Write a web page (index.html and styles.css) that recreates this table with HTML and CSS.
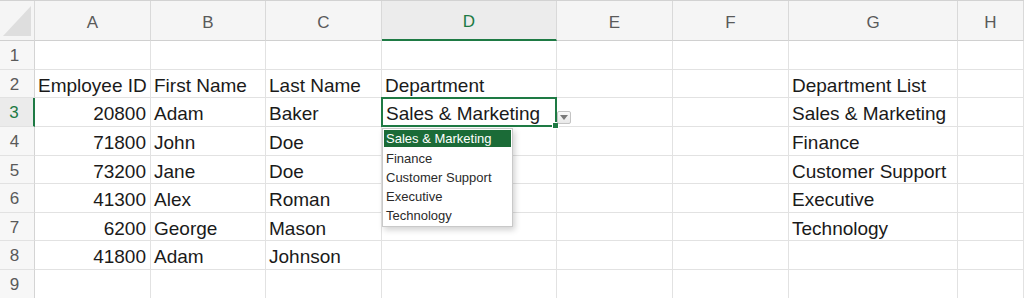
FILE: index.html
```html
<!DOCTYPE html>
<html>
<head>
<meta charset="utf-8">
<link rel="stylesheet" href="styles.css">
</head>
<body>
<div class="sheet">
  <div class="grid">
    <div class="hd corner"><svg class="tri" width="30" height="32" viewBox="0 0 30 32"><polygon points="29,1 29,31 1,31" fill="#dedede"/></svg></div>
    <div class="hd col">A</div>
    <div class="hd col">B</div>
    <div class="hd col">C</div>
    <div class="hd col sel-col">D</div>
    <div class="hd col">E</div>
    <div class="hd col">F</div>
    <div class="hd col">G</div>
    <div class="hd col">H</div>

    <div class="rh">1</div><div class="c"></div><div class="c"></div><div class="c"></div><div class="c"></div><div class="c"></div><div class="c"></div><div class="c"></div><div class="c"></div>

    <div class="rh">2</div><div class="c">Employee ID</div><div class="c">First Name</div><div class="c">Last Name</div><div class="c">Department</div><div class="c"></div><div class="c"></div><div class="c">Department List</div><div class="c"></div>

    <div class="rh sel-row">3</div><div class="c num">20800</div><div class="c">Adam</div><div class="c">Baker</div>
    <div class="c active">Sales &amp; Marketing
      <span class="handle"></span>
      <span class="ddbtn"><svg width="8" height="5" viewBox="0 0 8 5"><polygon points="0,0 8,0 4,5" fill="#7a7a7a"/></svg></span>
      <ul class="list">
        <li class="on">Sales &amp; Marketing</li>
        <li>Finance</li>
        <li>Customer Support</li>
        <li>Executive</li>
        <li>Technology</li>
      </ul>
    </div>
    <div class="c"></div><div class="c"></div><div class="c">Sales &amp; Marketing</div><div class="c"></div>

    <div class="rh">4</div><div class="c num">71800</div><div class="c">John</div><div class="c">Doe</div><div class="c"></div><div class="c"></div><div class="c"></div><div class="c">Finance</div><div class="c"></div>

    <div class="rh">5</div><div class="c num">73200</div><div class="c">Jane</div><div class="c">Doe</div><div class="c"></div><div class="c"></div><div class="c"></div><div class="c">Customer Support</div><div class="c"></div>

    <div class="rh">6</div><div class="c num">41300</div><div class="c">Alex</div><div class="c">Roman</div><div class="c"></div><div class="c"></div><div class="c"></div><div class="c">Executive</div><div class="c"></div>

    <div class="rh">7</div><div class="c num">6200</div><div class="c">George</div><div class="c">Mason</div><div class="c"></div><div class="c"></div><div class="c"></div><div class="c">Technology</div><div class="c"></div>

    <div class="rh">8</div><div class="c num">41800</div><div class="c">Adam</div><div class="c">Johnson</div><div class="c"></div><div class="c"></div><div class="c"></div><div class="c"></div><div class="c"></div>

    <div class="rh">9</div><div class="c"></div><div class="c"></div><div class="c"></div><div class="c"></div><div class="c"></div><div class="c"></div><div class="c"></div><div class="c"></div>
  </div>
</div>
</body>
</html>
```

FILE: styles.css
```css
html, body {
  margin: 0;
  padding: 0;
  background: #ffffff;
}
.sheet {
  width: 1024px;
  height: 298px;
  overflow: hidden;
  border-top: 1px solid #d2d2d2;
  box-sizing: border-box;
}
.grid {
  display: grid;
  grid-template-columns: 35px 116px 115px 116px 175px 116px 116px 169px 66px;
  grid-template-rows: 40px repeat(9, 28.65px);
  font-family: "Liberation Sans", Arial, sans-serif;
}
.grid > div {
  box-sizing: border-box;
  border-right: 1px solid #e2e2e2;
  border-bottom: 1px solid #e2e2e2;
  min-width: 0;
}
.hd {
  background: #f5f5f5;
  color: #5a5a5a;
  font-size: 17px;
  display: flex;
  align-items: center;
  justify-content: center;
  padding-top: 4px;
}
.grid > .hd {
  border-right: 1px solid #d9d9d9;
  border-bottom: 1px solid #d0d0d0;
}
.corner {
  justify-content: flex-end;
  align-items: flex-end;
  padding: 0 2px 3px 0;
}
.tri {
  display: block;
}
.grid > .sel-col {
  background: #ececec;
  color: #1e7a44;
  border-bottom: 2px solid #1e7a44;
}
.rh {
  background: #f7f7f7;
  color: #5a5a5a;
  font-size: 17px;
  line-height: 28px;
  text-align: center;
  padding-right: 5px;
  padding-top: 1px;
}
.grid > .rh {
  border-right: 1px solid #d4d4d4;
  border-bottom: 1px solid #e2e2e2;
}
.grid > .sel-row {
  background: #ebebeb;
  color: #1e7a44;
  border-right: 2px solid #1e7a44;
}
.c {
  font-size: 19px;
  line-height: 28px;
  color: #1a1a1a;
  padding: 2px 4px 0 3px;
  white-space: nowrap;
  overflow: visible;
  position: relative;
}
.num {
  text-align: right;
}
.grid > .active {
  border: 2px solid #1e7a44;
  margin: -1px 0 0 -1px;
  width: calc(100% + 1px);
  height: calc(100% + 1px);
  padding: 1px 4px 0 3px;
  line-height: 27px;
  z-index: 2;
}
.handle {
  position: absolute;
  right: -4px;
  bottom: -4px;
  width: 5px;
  height: 5px;
  background: #1e7a44;
  border: 1px solid #ffffff;
}
.ddbtn {
  position: absolute;
  left: calc(100% + 2px);
  top: 12px;
  width: 14px;
  height: 13px;
  box-sizing: border-box;
  border: 1px solid #c4c4c4;
  border-radius: 2px;
  background: linear-gradient(#fafafa, #e9e9e9);
  display: flex;
  align-items: center;
  justify-content: center;
}
.ddbtn svg {
  display: block;
}
.list {
  position: absolute;
  left: -1px;
  top: calc(100% + 3px);
  width: 131px;
  margin: 0;
  padding: 1px;
  list-style: none;
  background: #ffffff;
  border: 1px solid #c9c9c9;
  box-shadow: 2px 3px 6px rgba(0, 0, 0, 0.18);
  font-size: 13px;
  line-height: 19px;
  color: #2a2a2a;
  box-sizing: border-box;
}
.list li {
  padding-left: 2px;
  height: 19px;
}
.list li.on {
  background: #1b6b37;
  color: #ffffff;
  height: 17px;
  line-height: 17px;
  margin-bottom: 2px;
}
```
